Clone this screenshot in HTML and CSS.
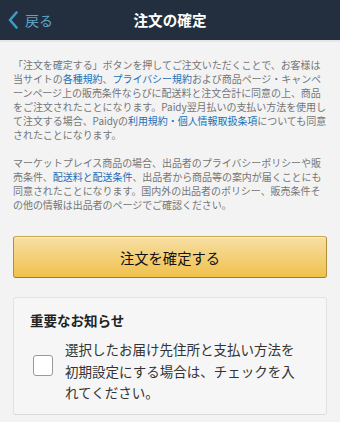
FILE: index.html
```html
<!DOCTYPE html>
<html lang="ja">
<head>
<meta charset="utf-8">
<title>注文の確定</title>
<link rel="stylesheet" href="styles.css">
</head>
<body>
<header class="topbar">
  <a class="back" href="#">
    <svg class="chev" width="10" height="18" viewBox="0 0 10 18"><path d="M8.5 1.5 L2 9 L8.5 16.5" fill="none" stroke="#3d9bc6" stroke-width="2.6" stroke-linecap="round" stroke-linejoin="round"/></svg>
    <span>戻る</span>
  </a>
  <h1 class="title">注文の確定</h1>
</header>
<main class="content">
  <p class="legal">「注文を確定する」ボタンを押してご注文いただくことで、お客様は<br>当サイトの<a href="#">各種規約</a>、<a href="#">プライバシー規約</a>および商品ページ・キャンペ<br>ーンページ上の販売条件ならびに配送料と注文合計に同意の上、商品<br>をご注文されたことになります。Paidy翌月払いの支払い方法を使用し<br>て注文する場合、Paidyの<a href="#">利用規約・個人情報取扱条項</a>についても同意<br>されたことになります。</p>
  <p class="legal">マーケットプレイス商品の場合、出品者のプライバシーポリシーや販<br>売条件、<a href="#">配送料と配送条件</a>、出品者から商品等の案内が届くことにも<br>同意されたことになります。国内外の出品者のポリシー、販売条件そ<br>の他の情報は出品者のページでご確認ください。</p>
  <button class="confirm" type="button">注文を確定する</button>
  <section class="notice">
    <h2 class="notice-title">重要なお知らせ</h2>
    <label class="notice-row">
      <span class="check"></span>
      <span class="notice-text">選択したお届け先住所と支払い方法を初期設定にする場合は、チェックを入れてください。</span>
    </label>
  </section>
</main>
</body>
</html>
```

FILE: styles.css
```css
* { box-sizing: border-box; }
html, body { margin: 0; padding: 0; }
body {
  width: 340px;
  height: 422px;
  overflow: hidden;
  background: #f3f3f3;
  font-family: "Noto Sans CJK JP", "Noto Sans", sans-serif;
  color: #333;
}
.topbar {
  height: 42px;
  background: #232f3e;
  border-bottom: 2px solid #e4e7ea;
  display: flex;
  align-items: center;
  justify-content: center;
  position: relative;
}
.back {
  position: absolute;
  left: 8px;
  top: 0;
  height: 40px;
  display: flex;
  align-items: center;
  gap: 7px;
  text-decoration: none;
  color: #5ea3c6;
  font-size: 14px;
}
.chev { display: block; }
.title {
  margin: 0;
  color: #fff;
  font-size: 14.6px;
  font-weight: 700;
  line-height: 40px;
}
.content {
  padding: 16px 13px 0;
}
.legal {
  margin: 0 0 14px;
  font-size: 10px;
  line-height: 14px;
  color: #767676;
  white-space: nowrap;
  letter-spacing: -0.05px;
}
.legal a { color: #1a6fb8; text-decoration: none; }
.confirm {
  display: block;
  width: 100%;
  height: 42px;
  margin-top: 24px;
  border: 1px solid;
  border-color: #c9a650 #b38f3a #9c7e31;
  border-radius: 3px;
  background: linear-gradient(#f7dfa5, #f0c14b);
  font-family: inherit;
  font-size: 14.3px;
  color: #111;
  box-shadow: 0 1px 0 rgba(255,255,255,.4) inset;
}
.notice {
  margin-top: 19px;
  background: #f6f6f6;
  border: 1px solid #e2e2e2;
  border-bottom-color: #d8dadc;
  border-radius: 3px;
  padding: 12px 16px 10px;
}
.notice-title {
  margin: 0;
  font-size: 13.5px;
  line-height: 20px;
  font-weight: 700;
  color: #222;
}
.notice-row {
  display: flex;
  align-items: center;
  gap: 12px;
  margin-top: 9px;
}
.check {
  flex: 0 0 20px;
  height: 21px;
  margin-left: 3px;
  margin-bottom: 11px;
  background: #fff;
  border: 1px solid #999;
  border-radius: 3px;
}
.notice-text {
  flex: 0 0 236px;
  font-size: 13.5px;
  line-height: 21.5px;
  color: #333;
}
```
